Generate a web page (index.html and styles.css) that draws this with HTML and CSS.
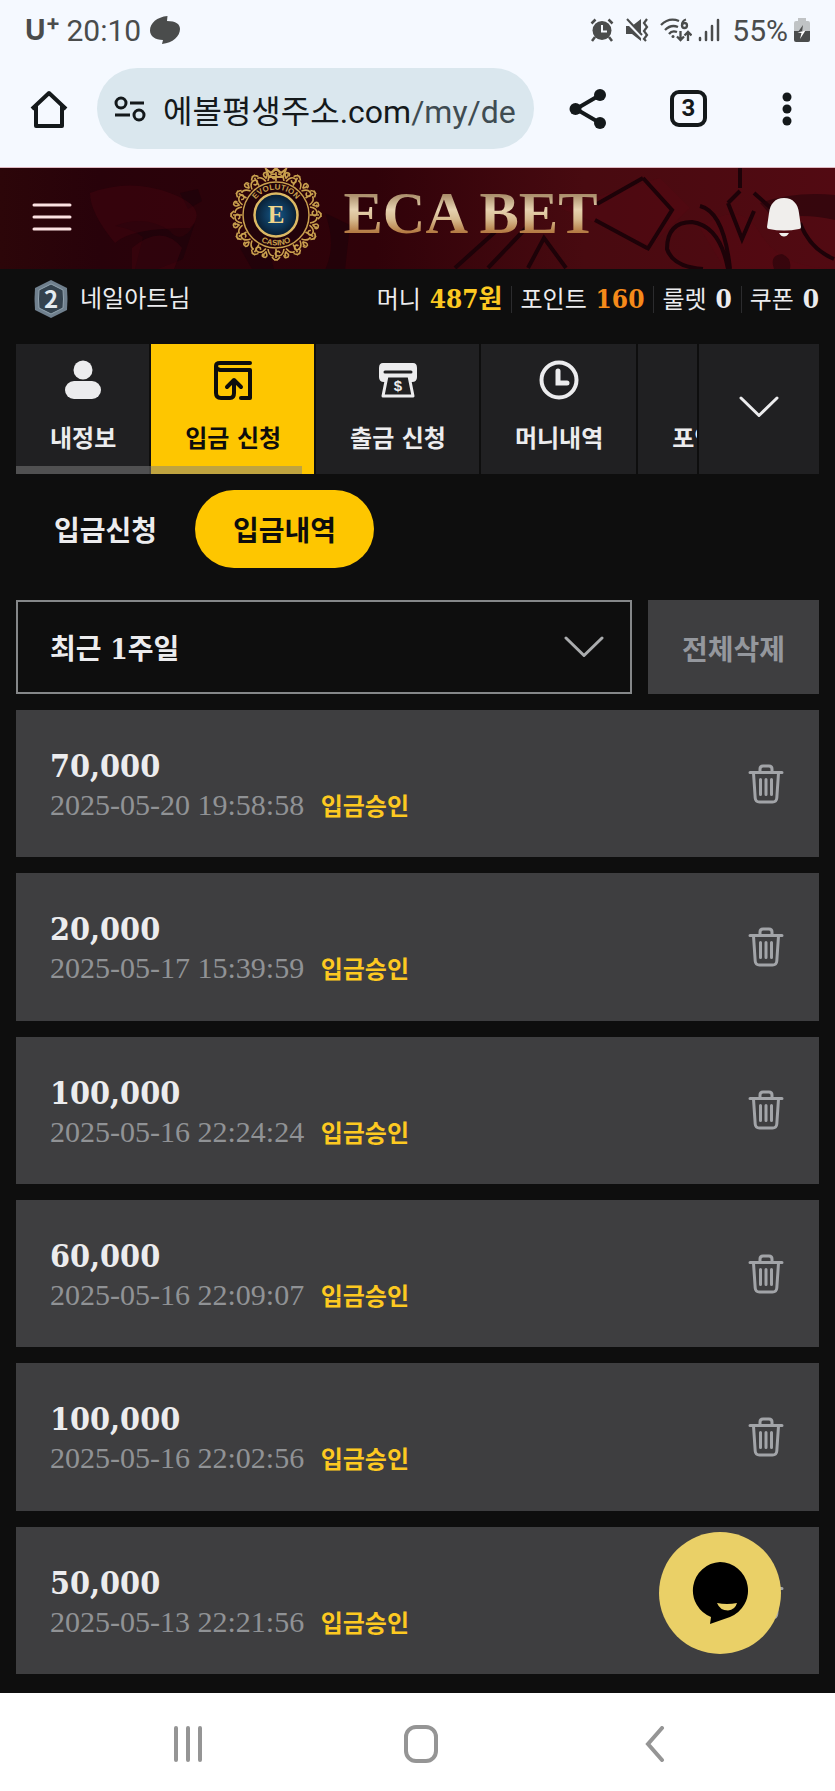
FILE: index.html
```html
<!DOCTYPE html>
<html lang="ko">
    <head>
        <meta charset="UTF-8">
        <meta name="viewport" content="width=device-width, initial-scale=1.0">
        <title>입금내역</title>
        <link rel="stylesheet" href="styles.css">
    </head>
    <body>
        <svg class="sprite" aria-hidden="true">
            <symbol id="trash" viewBox="0 0 36 40">
                <path d="M2 8.500H34M12 8V5q0-3 3-3h6q3 0 3 3v3M5.500 9l1.700 25q.3 4 4.300 4h13q4 0 4.300-4L30.500 9M12.500 15.500v15M18 15.500v15M23.500 15.500v15"/>
            </symbol>
            <symbol id="chevron" viewBox="0 0 40 22">
                <path d="M2 2l18 17.500L38 2"/>
            </symbol>
        </svg>

        <!-- phone status bar -->
        <div id="status">
            <b class="carrier">U<sup>+</sup></b>
            <span>20:10</span>
            <svg class="bubble" width="32" height="30" viewBox="0 0 32 30"><path d="M18.500 1C8 2 1 8 1 15.500 1 21 6 25 14 25l-1 4C24 28 31 21 31 14 31 9 27 6 18 6z" fill="#4a4c4c"/></svg>
            <div class="status-icons">
                <svg width="24" height="24" viewBox="0 0 24 24">
                    <circle cx="12" cy="12.500" r="9.500" fill="#4a4c4c"/>
                    <path d="M1.500 5.500l4-4M22.500 5.500l-4-4M5 19l-3 4M19 19l3 4" stroke="#4a4c4c" stroke-width="2.500"/>
                    <path d="M12 7v6.500h5" fill="none" stroke="#f5f9ff" stroke-width="2"/>
                </svg>
                <svg width="24" height="24" viewBox="0 0 24 24">
                    <path d="M1 8h6l9-7v22l-9-7H1z" fill="#4a4c4c"/>
                    <path d="M1 3l16 16" stroke="#f5f9ff" stroke-width="3"/>
                    <path d="M2 1l15 16" stroke="#4a4c4c" stroke-width="2"/>
                    <path d="M22 1l-3 4 3 4-3 4 3 4-3 4 2 2" fill="none" stroke="#4a4c4c" stroke-width="2.200"/>
                </svg>
                <svg width="32" height="24" viewBox="0 0 32 24" fill="none" stroke="#4a4c4c" stroke-width="2.300">
                    <path d="M1 7Q9-1 19 3M5 12Q11 6 18 9M9 16Q12 12 17 14"/>
                    <circle cx="13" cy="18.500" r="1.500" fill="#4a4c4c" stroke="none"/>
                    <path d="M26 1.500q-4 1-4 6"/><circle cx="24.500" cy="7.500" r="2.500"/>
                    <path d="M20.500 13v9M17 18.500l3.500 3.500 3.500-3.500M28 23v-9M24.500 17.500L28 14l3.500 3.500"/>
                </svg>
                <svg width="24" height="24" viewBox="0 0 24 24" stroke="#4a4c4c" stroke-width="2.500" stroke-linecap="round"><path d="M3 20v2M9 14v8M15 8v14M21 2v20"/></svg>
                <span>55%</span>
                <svg width="18" height="26" viewBox="0 0 18 26">
                    <path d="M5 1h8v3h2q2 0 2 2v8H1V6q0-2 2-2h2z" fill="#c0c3c5"/>
                    <path d="M1 14h16v9q0 2-2 2H3q-2 0-2-2z" fill="#4a4c4c"/>
                    <path d="M10 8l-5 7h4z" fill="#4a4c4c"/><path d="M4.500 15.500l8-2L7 22l1.500-6z" fill="#fff"/>
                </svg>
            </div>
        </div>

        <!-- browser bar -->
        <div id="browser">
            <button class="icon-btn" aria-label="홈">
                <svg width="38" height="38" viewBox="0 0 38 38" fill="none" stroke="#14191b" stroke-width="4" stroke-linejoin="round"><path d="M2 19L19 3l17 16M6 16v20h26V16"/></svg>
            </button>
            <div id="address">
                <svg width="32" height="26" viewBox="0 0 32 26" fill="none" stroke="#14191b" stroke-width="3"><circle cx="7" cy="7" r="5"/><circle cx="25" cy="19" r="5"/><path d="M16 7h14M1 19h15"/></svg>
                <a href="#">에볼평생주소.com<span>/my/de</span></a>
            </div>
            <div id="browser-tools">
                <button class="icon-btn" aria-label="공유">
                    <svg width="38" height="42" viewBox="0 0 38 42" fill="#14191b"><path d="M31 7L7 21l24 14" fill="none" stroke="#14191b" stroke-width="4"/><circle cx="6.500" cy="21" r="6"/><circle cx="31" cy="7" r="6"/><circle cx="31" cy="35" r="6"/></svg>
                </button>
                <button class="tab-count" aria-label="탭">3</button>
                <button class="icon-btn" aria-label="메뉴">
                    <svg width="10" height="34" viewBox="0 0 10 34" fill="#14191b"><circle cx="5" cy="5" r="4.500"/><circle cx="5" cy="17" r="4.500"/><circle cx="5" cy="29" r="4.500"/></svg>
                </button>
            </div>
        </div>

        <header>
            <svg class="pattern" viewBox="0 0 835 101" preserveAspectRatio="xMidYMid slice" aria-hidden="true">
                <g fill="#17020a" fill-opacity=".5">
                    <path d="M115 58q30-12 55 5 12 15 25-8l-12 36q-20 8-26 10h-22l8-32q-10-8-28-11z"/>
                    <path d="M180 25l18-4 4 12-14 8zM325 45l25 12-5 45h-20q12-25 0-57zM240 80l12 21h22l-8-30z"/>
                </g>
                <g fill="#5a0812" fill-opacity=".25">
                    <path d="M90 25q40-15 80 0t20 35q-60 0-75 15Q90 45 90 25zM132 80q30-25 50 0l-8 21h-42zM560 40l100-30 30 30-40 38z"/>
                    <path d="M700 60q40-30 60 5t75 36h-110z"/>
                </g>
                <g fill="none" stroke="#1d0208" stroke-width="4">
                    <path d="M455 100l40-36M488 100l40-42M528 100l16-30 22 30M595 52l52 28M597 36l46-26M643 10l29 32-25 40"/>
                    <path d="M703 101q-30-2-36-20 0-27 25-27 28 4 36 47M700 38q24 6 30 63M728 35l12-12M728 35l14 36 12-28M740 20V0M754 25l18 16M800 55q10 26 34 36"/>
                </g>
                <path d="M760 35q35-12 75-8v25q-35-8-60 0zM774 101q-5-14 8-15 10 4 8 15z" fill="#25030a" fill-opacity=".6"/>
            </svg>
            <button class="hamburger" aria-label="전체메뉴">
                <svg width="40" height="30" viewBox="0 0 40 30" stroke="#fbe2e2" stroke-width="3" stroke-linecap="round"><path d="M2 3h36M2 15h36M2 27h36"/></svg>
            </button>
            <a class="brand" href="#">
                <svg width="96" height="96" viewBox="-48 -48 96 96">
                    <defs>
                        <radialGradient id="blue"><stop offset="0" stop-color="#155a8c"/><stop offset="1" stop-color="#081c30"/></radialGradient>
                        <path id="arc-top" d="M-25.500 0a25.500 25.500 0 0 1 51 0"/>
                        <path id="arc-bottom" d="M-30.500 0a30.500 30.500 0 0 0 61 0"/>
                        <g id="leaf" fill="none" stroke="#c9a04e" stroke-width="1.600">
                            <path d="M-8-34q1-7 6-7 4 1 2 4-3 2-4-1M8-34q-1-7-6-7M0-34v-9M-4-42q4-6 8 0M-9-37q-5-2-3-5 4-2 4 2M9-37q4-1 3-4M-2-45h4"/>
                        </g>
                    </defs>
                    <use href="#leaf"/>
                    <use href="#leaf" transform="rotate(30)"/>
                    <use href="#leaf" transform="rotate(60)"/>
                    <use href="#leaf" transform="rotate(90)"/>
                    <use href="#leaf" transform="rotate(120)"/>
                    <use href="#leaf" transform="rotate(150)"/>
                    <use href="#leaf" transform="rotate(180)"/>
                    <use href="#leaf" transform="rotate(210)"/>
                    <use href="#leaf" transform="rotate(240)"/>
                    <use href="#leaf" transform="rotate(270)"/>
                    <use href="#leaf" transform="rotate(300)"/>
                    <use href="#leaf" transform="rotate(330)"/>
                    <circle r="33" fill="#22030a" stroke="#c9a04e" stroke-width="1.500"/>
                    <circle r="21.500" fill="url(#blue)" stroke="#dcb964" stroke-width="2.500"/>
                    <path d="M-10-46l5 4 5-5 5 5 5-4-3 8H-7z" fill="none" stroke="#c9a04e" stroke-width="2"/>
                    <text class="ring"><textPath href="#arc-top" startOffset="50%">EVOLUTION</textPath></text>
                    <text class="ring"><textPath href="#arc-bottom" startOffset="50%">CASINO</textPath></text>
                    <text class="letter" y="8">E</text>
                </svg>
                <span>ECA BET</span>
            </a>
            <button class="bell" aria-label="알림">
                <svg width="36" height="40" viewBox="0 0 36 40" fill="#f0eeec"><path d="M18 1C9 1 4 7 3 16L1 30q0 2 2 2 15 3 30 0 2 0 2-2l-2-14C32 7 27 1 18 1zM13 36h10q-2 3.500-5 3.500T13 36z"/></svg>
            </button>
        </header>

        <div id="user">
            <svg class="level" width="36" height="40" viewBox="0 0 36 40">
                <path d="M18 1l16 8q1 11 0 22l-16 8-16-8q-1-11 0-22z" fill="#70808e"/>
                <path d="M18 5l12 6q1 9 0 18l-12 6-12-6q-1-9 0-18z" fill="#34424e" stroke="#93a4b0"/>
                <text x="18" y="29">2</text>
            </svg>
            <span class="nick">네일아트님</span>
            <ul>
                <li>머니 <b class="money">487원</b></li>
                <li>포인트 <b class="point">160</b></li>
                <li>룰렛 <b>0</b></li>
                <li>쿠폰 <b>0</b></li>
            </ul>
        </div>

        <main>
            <div id="menu">
                <nav>
                    <a href="#">
                        <svg width="40" height="40" viewBox="0 0 40 40" fill="#ececee"><circle cx="20" cy="10" r="9.500"/><rect x="2" y="21" width="36" height="18" rx="9"/></svg>
                        내정보
                    </a>
                    <a class="on" href="#">
                        <svg width="40" height="40" viewBox="0 0 40 40" fill="none" stroke="#0d0d0d" stroke-width="4" stroke-linecap="round" stroke-linejoin="round"><path d="M37 3H7Q3 3 3 6t4 4h30v28H28M3 6v27q0 5 5 5h9q4 0 4-5V21M14 27l7-7 7 7"/></svg>
                        입금 신청
                    </a>
                    <a href="#">
                        <svg width="40" height="40" viewBox="0 0 40 40">
                            <path d="M5 3h30q4 0 4 5v9q0 5-5 5H6q-5 0-5-5V8q0-5 4-5z" fill="#ececee"/>
                            <path d="M7 12h26" stroke="#202022" stroke-width="3" stroke-linecap="round"/>
                            <path d="M9 16h22q2 10 4 20H5q2-10 4-20z" fill="#202022" stroke="#ececee" stroke-width="3" stroke-linejoin="round"/>
                            <text class="dollar" x="20" y="31">$</text>
                        </svg>
                        출금 신청
                    </a>
                    <a href="#">
                        <svg width="40" height="40" viewBox="0 0 40 40" fill="none" stroke="#ececee" stroke-width="4"><circle cx="20" cy="20" r="17.500"/><path d="M19 11v12h9" stroke-width="5" stroke-linecap="round"/></svg>
                        머니내역
                    </a>
                    <a href="#">
                        <svg width="40" height="40" viewBox="0 0 40 40" fill="none" stroke="#ececee" stroke-width="4"><circle cx="20" cy="20" r="17.500"/></svg>
                        포인트내역
                    </a>
                    <i class="scrollbar"></i>
                </nav>
                <button class="more" aria-label="펼치기"><svg class="chevron" width="40" height="22"><use href="#chevron"/></svg></button>
            </div>

            <div id="submenu">
                <a href="#">입금신청</a>
                <a class="on" href="#">입금내역</a>
            </div>

            <div id="filter">
                <div class="period">
                    <select aria-label="기간">
                        <option>최근 1주일</option>
                    </select>
                    <svg class="chevron" width="40" height="22"><use href="#chevron"/></svg>
                </div>
                <button class="delete-all">전체삭제</button>
            </div>

            <ul id="history">
                <li>
                    <div>
                        <p class="amount">70,000</p>
                        <p class="date">2025-05-20 19:58:58 <b>입금승인</b></p>
                    </div>
                    <button class="delete" aria-label="삭제"><svg width="36" height="40"><use href="#trash"/></svg></button>
                </li>
                <li>
                    <div>
                        <p class="amount">20,000</p>
                        <p class="date">2025-05-17 15:39:59 <b>입금승인</b></p>
                    </div>
                    <button class="delete" aria-label="삭제"><svg width="36" height="40"><use href="#trash"/></svg></button>
                </li>
                <li>
                    <div>
                        <p class="amount">100,000</p>
                        <p class="date">2025-05-16 22:24:24 <b>입금승인</b></p>
                    </div>
                    <button class="delete" aria-label="삭제"><svg width="36" height="40"><use href="#trash"/></svg></button>
                </li>
                <li>
                    <div>
                        <p class="amount">60,000</p>
                        <p class="date">2025-05-16 22:09:07 <b>입금승인</b></p>
                    </div>
                    <button class="delete" aria-label="삭제"><svg width="36" height="40"><use href="#trash"/></svg></button>
                </li>
                <li>
                    <div>
                        <p class="amount">100,000</p>
                        <p class="date">2025-05-16 22:02:56 <b>입금승인</b></p>
                    </div>
                    <button class="delete" aria-label="삭제"><svg width="36" height="40"><use href="#trash"/></svg></button>
                </li>
                <li>
                    <div>
                        <p class="amount">50,000</p>
                        <p class="date">2025-05-13 22:21:56 <b>입금승인</b></p>
                    </div>
                    <button class="delete" aria-label="삭제"><svg width="36" height="40"><use href="#trash"/></svg></button>
                </li>
            </ul>

            <button id="chat" aria-label="상담">
                <svg width="58" height="62" viewBox="0 0 58 62"><path d="M29 0a28.500 28.500 0 0 1 10 55L19 62l1-7A28.500 28.500 0 0 1 29 0z"/><path d="M26 41q10 2 20 0-2 7-9 7.500-8 0-11-7.500z" fill="#ead067"/></svg>
            </button>
        </main>

        <!-- phone navigation -->
        <div id="phone-nav">
            <button aria-label="최근 앱"><svg width="30" height="36" viewBox="0 0 30 36"><path d="M3 2v32M15 2v32M27 2v32"/></svg></button>
            <button aria-label="홈 화면"><svg width="34" height="38" viewBox="0 0 34 38"><rect x="2" y="2" width="30" height="34" rx="10"/></svg></button>
            <button aria-label="뒤로"><svg width="20" height="36" viewBox="0 0 20 36"><path d="M17 2L3 18l14 16"/></svg></button>
        </div>
    </body>
</html>
```
FILE: styles.css
```css
*{
    box-sizing: border-box;
}
body{
    display: flex;
    flex-direction: column;
    min-height: 100vh;
    margin: 0;
    background-color: #0e0e0e;
    color: #ececee;
    font-family: "DejaVu Serif Condensed", "Noto Sans CJK KR", serif;
    font-size: 24px;
}
button{
    border: 0;
    padding: 0;
    background: none;
    color: inherit;
    font: inherit;
}
a{
    color: inherit;
    text-decoration: none;
}
ul{
    list-style: none;
    margin: 0;
    padding: 0;
}
p{
    margin: 0;
}
svg{
    display: block;
    flex: none;
}
.sprite{
    position: absolute;
    width: 0;
    height: 0;
}

/* status bar */
#status{
    display: flex;
    align-items: center;
    height: 60px;
    padding: 0 24px 0 25px;
    background-color: #f5f9ff;
    color: #4a4c4c;
    font-family: Roboto, sans-serif;
    font-size: 30px;
}
.carrier{
    margin-right: 6px;
    font-family: Inter, sans-serif;
    font-size: 28px;
}
.carrier sup{
    font-size: 22px;
    line-height: 0;
}
.bubble{
    margin-left: 8px;
}
.status-icons{
    display: flex;
    align-items: center;
    gap: 11px;
    margin-left: auto;
}
.status-icons svg:nth-child(4){
    margin-left: -6px;
}
.status-icons svg:last-child{
    margin-left: -6px;
}

/* browser bar */
#browser{
    display: flex;
    align-items: center;
    height: 108px;
    padding: 0 43px 10px 30px;
    background-color: #f5f9ff;
    border-bottom: 1px solid #dfb9c2;
    color: #14191b;
}
#address{
    display: flex;
    align-items: center;
    flex: 1;
    gap: 17px;
    height: 81px;
    margin-left: 29px;
    padding: 0 17px;
    border-radius: 41px;
    background-color: #dae7ee;
    font-family: Roboto, "Noto Sans CJK KR", sans-serif;
    font-size: 32px;
    white-space: nowrap;
    overflow: hidden;
}
#address span{
    color: #3f4c52;
}
#browser-tools{
    display: flex;
    align-items: center;
    justify-content: space-between;
    width: 36%;
    max-width: 223px;
    margin-left: 35px;
}
.tab-count{
    width: 37px;
    height: 37px;
    margin-right: 12px;
    border: 4px solid #14191b;
    border-radius: 9px;
    font: bold 24px/29px Roboto, sans-serif;
}

/* site header */
header{
    position: relative;
    display: flex;
    align-items: center;
    justify-content: space-between;
    height: 101px;
    padding: 0 33px 3px 32px;
    background-image: linear-gradient(90deg, #2c0609, #28020a 12%, #300209 45%, #480a10 70%, #520a12);
    overflow: hidden;
}
.pattern{
    position: absolute;
    top: 0;
    left: 0;
    width: 100%;
    height: 100%;
}
.hamburger, .brand, .bell{
    position: relative;
}
.brand{
    display: flex;
    align-items: center;
    gap: 19px;
    height: 96px;
    margin: 0 12px 5px 0;
}
.brand span{
    padding-bottom: 4px;
    background-image: linear-gradient(#a88b68 20%, #e6d2b0 42%, #d8bb90 56%, #b57c45 74%);
    -webkit-background-clip: text;
    background-clip: text;
    color: transparent;
    font: bold 59px/66px "Liberation Serif", serif;
}
.ring{
    fill: #c9a04e;
    font: bold 8px "Liberation Sans", sans-serif;
    text-anchor: middle;
}
.letter{
    fill: #f0d68c;
    font: bold 25px "Liberation Serif", serif;
    text-anchor: middle;
}

/* user info */
#user{
    display: flex;
    align-items: center;
    height: 60px;
    padding: 0 16px 0 33px;
    line-height: 26px;
    white-space: nowrap;
}
.level text{
    fill: #e4ebf0;
    font: bold 24px "Noto Sans CJK KR", sans-serif;
    text-anchor: middle;
}
.nick{
    margin-left: 11px;
}
#user ul{
    display: flex;
    margin-left: auto;
}
#user li + li{
    margin-left: 9px;
    padding-left: 8px;
    border-left: 1px solid #2c2c2e;
}
#user b{
    margin-left: 2px;
    font-size: 26px;
}
.money{
    color: #fdc921;
}
.point{
    color: #f68a1a;
}

main{
    position: relative;
    display: flex;
    flex: 1;
    flex-direction: column;
    padding: 15px 16px 19px;
}

/* main tabs */
#menu{
    display: flex;
    gap: 2px;
    height: 130px;
    font-weight: bold;
}
nav{
    position: relative;
    display: flex;
    flex: 1;
    gap: 2px;
    min-width: 0;
    overflow: hidden;
}
nav a{
    display: flex;
    flex: none;
    flex-direction: column;
    align-items: center;
    gap: 20px;
    padding: 16px 33px 0 34px;
    background-color: #202022;
    line-height: 38px;
}
nav .on{
    background-color: #fec600;
    color: #0d0d0d;
}
.dollar{
    fill: #ececee;
    font: bold 15px "Liberation Sans", sans-serif;
    text-anchor: middle;
}
.scrollbar{
    position: absolute;
    left: 0;
    bottom: 0;
    width: 42%;
    height: 8px;
    background-color: rgba(128, 128, 128, .5);
}
.more{
    display: flex;
    align-items: center;
    justify-content: center;
    width: 120px;
    padding-bottom: 4px;
    background-color: #202022;
    color: #ececee;
}
.chevron{
    fill: none;
    stroke: currentColor;
    stroke-width: 3;
    stroke-linecap: round;
    stroke-linejoin: round;
}

/* sub tabs */
#submenu{
    display: flex;
    margin: 16px 0 32px;
    font-size: 28px;
    font-weight: bold;
    line-height: 72px;
}
#submenu a{
    padding: 6px 38px 0;
    border-radius: 39px;
}
#submenu .on{
    background-color: #fec600;
    color: #0d0d0d;
}

/* filter */
#filter{
    display: flex;
    gap: 16px;
    height: 94px;
    font-size: 28px;
    font-weight: bold;
}
.period{
    position: relative;
    flex: 1;
}
.period select{
    width: 100%;
    height: 100%;
    padding: 4px 32px 0;
    border: 2px solid #858789;
    border-radius: 0;
    background-color: #0e0e0e;
    color: #ececee;
    font: inherit;
    appearance: none;
}
.period .chevron{
    position: absolute;
    top: 36px;
    right: 28px;
    color: #aaacae;
    pointer-events: none;
}
.delete-all{
    width: 171px;
    padding-top: 2px;
    background-color: #3e3e40;
    color: #94979d;
}

/* history list */
#history{
    display: grid;
    flex: 1;
    grid-auto-rows: 1fr;
    gap: 16px;
    margin-top: 16px;
}
#history li{
    display: flex;
    align-items: center;
    justify-content: space-between;
    min-height: 147px;
    padding: 0 35px 0 34px;
    background-color: #3e3e40;
}
.amount{
    padding-top: 5px;
    font-size: 32px;
    font-weight: bold;
    line-height: 40px;
}
.date{
    color: #909295;
    font-family: "Liberation Serif", "Noto Sans CJK KR", serif;
    font-size: 30px;
    line-height: 38px;
}
.date b{
    margin-left: 9px;
    color: #fdc921;
    font-size: 24px;
}
.delete svg{
    fill: none;
    stroke: #a2a4a8;
    stroke-width: 3;
    stroke-linecap: round;
}
#chat{
    position: absolute;
    right: 54px;
    bottom: 39px;
    display: flex;
    align-items: center;
    justify-content: center;
    width: 122px;
    height: 122px;
    border-radius: 50%;
    background-color: #ead067;
}

/* phone navigation */
#phone-nav{
    display: grid;
    grid-template-columns: repeat(3, 1fr);
    align-items: center;
    justify-items: center;
    height: 98px;
    padding: 4px 63px 0 71px;
    background-color: #fff;
}
#phone-nav svg{
    fill: none;
    stroke: #959595;
    stroke-width: 4;
    stroke-linecap: round;
}
```
